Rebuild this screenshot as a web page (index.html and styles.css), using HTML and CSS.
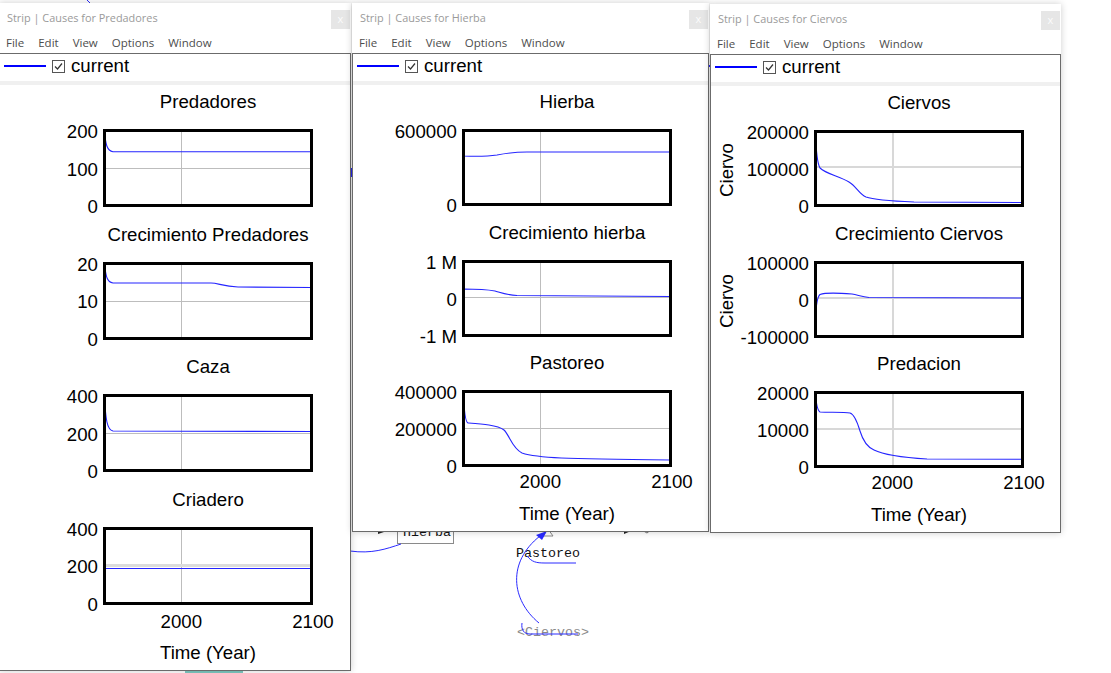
FILE: index.html
```html
<!DOCTYPE html>
<html lang="es">
<head>
<meta charset="utf-8">
<title>Strip</title>
<link rel="stylesheet" href="styles.css">
</head>
<body>
<div class="desk">
  <svg class="diagram" width="1111" height="673" viewBox="0 0 1111 673">
    <line class="bl" x1="87" y1="0" x2="90" y2="3"/>
    <rect class="blf" x="350" y="168" width="2" height="9"/>
    <rect class="blf" x="708" y="65" width="3" height="2"/>
    <rect class="box" x="397.5" y="512.5" width="56" height="31"/>
    <text class="mono" x="403" y="536">Hierba</text>
    <path class="bl" d="M350,551 C372,554 386,549 401,544"/>
    <polygon class="blk" points="378,530 384,532 378,534"/>
    <polygon class="tri" points="543,536 548,529 553,536"/>
    <polygon class="blk" points="624,528 631,531 624,534"/>
    <path class="gr" d="M640,529 L647,533 L652,529"/>
    <text class="mono" x="516" y="557">Pastoreo</text>
    <path class="bl" d="M527,556 C532,562 536,563 545,563 L576,563"/>
    <path class="bl" d="M539,623 C511,600 507,562 540,536"/>
    <polygon class="blf" points="547,531 536,535 542,540"/>
    <text class="mono grey" x="517" y="636">&lt;Ciervos&gt;</text>
    <path class="bl" d="M522,623 C521,630 524,634 530,634 L578,634"/>
    <rect class="teal" x="185" y="670" width="58" height="3"/>
  </svg>

  <div class="win w1">
    <div class="titlebar"><span class="ttl">Strip | Causes for Predadores</span><span class="close">x</span></div>
    <div class="menubar"><span>File</span><span>Edit</span><span>View</span><span>Options</span><span>Window</span></div>
    <div class="panel">
      <div class="legend"><span class="swatch"></span><svg class="chk" viewBox="0 0 13 13"><rect x="0.5" y="0.5" width="12" height="12"/><path d="M3,6.5 L5.5,9 L10,3.5"/></svg><span class="lname">current</span></div>
      <div class="strip"></div>
      <div class="charts">
        <div class="chart">
          <div class="ctitle">Predadores</div>
          <div class="crow">
            <div class="yaxis"><div class="ticks"><span>200</span><span>100</span><span>0</span></div></div>
            <svg class="plot" viewBox="0 0 210 78">
              <rect class="bg" x="1.5" y="1.5" width="207" height="75"/>
              <line class="g" x1="78.5" y1="2" x2="78.5" y2="76"/>
              <line class="g" x1="2" y1="39.5" x2="208" y2="39.5"/>
              <path class="c" d="M1.5,2 C2.5,15 4,22 10,22.7 L208,22.7"/>
              <rect class="frame" x="1.5" y="1.5" width="207" height="75"/>
            </svg>
          </div>
        </div>
        <div class="chart">
          <div class="ctitle">Crecimiento Predadores</div>
          <div class="crow">
            <div class="yaxis"><div class="ticks"><span>20</span><span>10</span><span>0</span></div></div>
            <svg class="plot" viewBox="0 0 210 78">
              <rect class="bg" x="1.5" y="1.5" width="207" height="75"/>
              <line class="g" x1="78.5" y1="2" x2="78.5" y2="76"/>
              <line class="g" x1="2" y1="39.5" x2="208" y2="39.5"/>
              <path class="c" d="M1.5,2 C3,15 4,20 10,21 L108,21 C115,21 120,24.5 135,25 L208,25.5"/>
              <rect class="frame" x="1.5" y="1.5" width="207" height="75"/>
            </svg>
          </div>
        </div>
        <div class="chart">
          <div class="ctitle">Caza</div>
          <div class="crow">
            <div class="yaxis"><div class="ticks"><span>400</span><span>200</span><span>0</span></div></div>
            <svg class="plot" viewBox="0 0 210 78">
              <rect class="bg" x="1.5" y="1.5" width="207" height="75"/>
              <line class="g" x1="78.5" y1="2" x2="78.5" y2="76"/>
              <line class="g" x1="2" y1="39.5" x2="208" y2="39.5"/>
              <path class="c" d="M1.5,2 C2.5,25 4,36 10,37 L208,37.5"/>
              <rect class="frame" x="1.5" y="1.5" width="207" height="75"/>
            </svg>
          </div>
        </div>
        <div class="chart">
          <div class="ctitle">Criadero</div>
          <div class="crow">
            <div class="yaxis"><div class="ticks"><span>400</span><span>200</span><span>0</span></div></div>
            <svg class="plot" viewBox="0 0 210 78">
              <rect class="bg" x="1.5" y="1.5" width="207" height="75"/>
              <line class="g" x1="78.5" y1="2" x2="78.5" y2="76"/>
              <line class="gw" x1="2" y1="38.5" x2="208" y2="38.5"/>
              <path class="c" d="M2,41.5 L208,41.5"/>
              <rect class="frame" x="1.5" y="1.5" width="207" height="75"/>
            </svg>
          </div>
        </div>
        <div class="xaxis"><span class="xt"><span>2000</span></span><span class="xt"><span>2100</span></span></div>
        <div class="xtitle">Time (Year)</div>
      </div>
    </div>
  </div>

  <div class="win w2">
    <div class="titlebar"><span class="ttl">Strip | Causes for Hierba</span><span class="close">x</span></div>
    <div class="menubar"><span>File</span><span>Edit</span><span>View</span><span>Options</span><span>Window</span></div>
    <div class="panel">
      <div class="legend"><span class="swatch"></span><svg class="chk" viewBox="0 0 13 13"><rect x="0.5" y="0.5" width="12" height="12"/><path d="M3,6.5 L5.5,9 L10,3.5"/></svg><span class="lname">current</span></div>
      <div class="strip"></div>
      <div class="charts">
        <div class="chart">
          <div class="ctitle">Hierba</div>
          <div class="crow">
            <div class="yaxis"><div class="ticks"><span>600000</span><span class="blank"></span><span>0</span></div></div>
            <svg class="plot" viewBox="0 0 210 77">
              <rect class="bg" x="1.5" y="1.5" width="207" height="74"/>
              <line class="g" x1="78.5" y1="2" x2="78.5" y2="75"/>
              <path class="c" d="M1.5,2 L1.5,27 C15,27.5 25,27.5 35,26 C45,24 52,23 65,23 L208,23"/>
              <rect class="frame" x="1.5" y="1.5" width="207" height="74"/>
            </svg>
          </div>
        </div>
        <div class="chart">
          <div class="ctitle">Crecimiento hierba</div>
          <div class="crow">
            <div class="yaxis"><div class="ticks"><span>1 M</span><span>0</span><span>-1 M</span></div></div>
            <svg class="plot" viewBox="0 0 210 77">
              <rect class="bg" x="1.5" y="1.5" width="207" height="74"/>
              <line class="g" x1="78.5" y1="2" x2="78.5" y2="75"/>
              <line class="g" x1="2" y1="37.5" x2="208" y2="37.5"/>
              <path class="c" d="M1.5,60 L1.5,29 C10,29 25,29.5 33,31 C40,33 45,35 55,35.5 L208,36.5"/>
              <rect class="frame" x="1.5" y="1.5" width="207" height="74"/>
            </svg>
          </div>
        </div>
        <div class="chart">
          <div class="ctitle">Pastoreo</div>
          <div class="crow">
            <div class="yaxis"><div class="ticks"><span>400000</span><span>200000</span><span>0</span></div></div>
            <svg class="plot" viewBox="0 0 210 77">
              <rect class="bg" x="1.5" y="1.5" width="207" height="74"/>
              <line class="g" x1="78.5" y1="2" x2="78.5" y2="75"/>
              <line class="g" x1="2" y1="38.5" x2="208" y2="38.5"/>
              <path class="c" d="M1.5,2 C2,20 3,32 6,33 C20,34 35,35 42,40 C48,46 50,58 60,63 C75,68 100,69 208,70"/>
              <rect class="frame" x="1.5" y="1.5" width="207" height="74"/>
            </svg>
          </div>
        </div>
        <div class="xaxis"><span class="xt"><span>2000</span></span><span class="xt"><span>2100</span></span></div>
        <div class="xtitle">Time (Year)</div>
      </div>
    </div>
  </div>

  <div class="win w3">
    <div class="titlebar"><span class="ttl">Strip | Causes for Ciervos</span><span class="close">x</span></div>
    <div class="menubar"><span>File</span><span>Edit</span><span>View</span><span>Options</span><span>Window</span></div>
    <div class="panel">
      <div class="legend"><span class="swatch"></span><svg class="chk" viewBox="0 0 13 13"><rect x="0.5" y="0.5" width="12" height="12"/><path d="M3,6.5 L5.5,9 L10,3.5"/></svg><span class="lname">current</span></div>
      <div class="strip"></div>
      <div class="charts">
        <div class="chart">
          <div class="ctitle">Ciervos</div>
          <div class="crow">
            <div class="yaxis"><span class="ylabel">Ciervo</span><div class="ticks"><span>200000</span><span>100000</span><span>0</span></div></div>
            <svg class="plot" viewBox="0 0 210 77">
              <rect class="bg" x="1.5" y="1.5" width="207" height="74"/>
              <line class="gl" x1="79" y1="2" x2="79" y2="75"/>
              <line class="gl" x1="2" y1="37" x2="208" y2="37"/>
              <path class="c" d="M1.5,1 C2,20 3,33 6,38 C12,44 25,46 35,52 C42,56 45,64 52,67 C60,70 75,71 100,72 L208,72.5"/>
              <rect class="frame" x="1.5" y="1.5" width="207" height="74"/>
            </svg>
          </div>
        </div>
        <div class="chart">
          <div class="ctitle">Crecimiento Ciervos</div>
          <div class="crow">
            <div class="yaxis"><span class="ylabel">Ciervo</span><div class="ticks"><span>100000</span><span>0</span><span>-100000</span></div></div>
            <svg class="plot" viewBox="0 0 210 77">
              <rect class="bg" x="1.5" y="1.5" width="207" height="74"/>
              <line class="gl" x1="79" y1="2" x2="79" y2="75"/>
              <line class="gl" x1="2" y1="37" x2="208" y2="37"/>
              <path class="c" d="M1.5,57 C2,45 3,36 6,33.5 C10,32 25,32 38,33 C44,34 48,36 55,36.5 L208,37"/>
              <rect class="frame" x="1.5" y="1.5" width="207" height="74"/>
            </svg>
          </div>
        </div>
        <div class="chart">
          <div class="ctitle">Predacion</div>
          <div class="crow">
            <div class="yaxis"><div class="ticks"><span>20000</span><span>10000</span><span>0</span></div></div>
            <svg class="plot" viewBox="0 0 210 77">
              <rect class="bg" x="1.5" y="1.5" width="207" height="74"/>
              <line class="gl" x1="79" y1="2" x2="79" y2="75"/>
              <line class="gl" x1="2" y1="38" x2="208" y2="38"/>
              <path class="c" d="M1.5,1 C2,12 3,19 6,21 C15,21.5 30,21 36,22 C40,23 43,30 46,40 C49,50 53,56 60,59 C68,63 80,66 113,68 L208,68.3"/>
              <rect class="frame" x="1.5" y="1.5" width="207" height="74"/>
            </svg>
          </div>
        </div>
        <div class="xaxis"><span class="xt"><span>2000</span></span><span class="xt"><span>2100</span></span></div>
        <div class="xtitle">Time (Year)</div>
      </div>
    </div>
  </div>
</div>
</body>
</html>
```

FILE: styles.css
```css
* { box-sizing: border-box; }
html, body { margin: 0; padding: 0; background: #ffffff; }
body { width: 1111px; height: 673px; overflow: hidden; font-family: "Liberation Sans", Arial, sans-serif; }

.desk { position: relative; width: 1111px; height: 673px; }

.diagram { position: absolute; left: 0; top: 0; }
.diagram .bl { fill: none; stroke: #2a2aff; stroke-width: 1; }
.diagram .blf { fill: #2a2aff; }
.diagram .blk { fill: #222; }
.diagram .gr { fill: none; stroke: #777; stroke-width: 1; }
.diagram .box { fill: #fff; stroke: #8a8a8a; stroke-width: 1; }
.diagram .tri { fill: #fff; stroke: #888; stroke-width: 1; }
.diagram .mono { font-family: "Liberation Mono", "Courier New", monospace; font-size: 13.33px; fill: #111; }
.diagram .grey { fill: #8a8a8a; }
.diagram .teal { fill: #7ec9c1; }

.win {
  position: absolute;
  display: flex;
  flex-direction: column;
  background: #ffffff;
  box-shadow: 0 0 7px rgba(0, 0, 0, 0.2);
}
.w1 { left: -1px; top: 3px; width: 352px; height: 668px; --off: 103px; --bh: 78px; --cg: 16.67px; --axm: 6px; --ttm: 9px; }
.w2 { left: 352px; top: 3px; width: 357px; height: 529px; --off: 109px; --bh: 77px; --cg: 15.5px; --axm: 4px; --ttm: 10px; }
.w3 { left: 710px; top: 4px; width: 351px; height: 529px; --off: 103px; --bh: 77px; --cg: 15.5px; --axm: 4px; --ttm: 10px; }

.titlebar {
  height: 28px;
  flex: none;
  display: flex;
  align-items: flex-start;
  justify-content: space-between;
  padding: 0 1px 0 8px;
  font-family: "Open Sans", "Noto Sans", sans-serif;
}
.ttl { margin-top: 7px; line-height: 16px; font-size: 10.9px; color: #9a9a9a; white-space: nowrap; }
.close {
  margin-top: 7px;
  width: 19px;
  height: 19px;
  background: #e6e6e6;
  color: #fbfbfb;
  font-size: 11px;
  line-height: 18px;
  text-align: center;
}

.menubar {
  height: 22px;
  flex: none;
  display: flex;
  gap: 14px;
  padding: 2px 0 0 7px;
  font-family: "Open Sans", "Noto Sans", sans-serif;
  font-size: 11.5px;
  line-height: 20px;
  color: #4d4d4d;
}

.panel {
  flex: 1;
  border: 1px solid #6b6b6b;
  background: #ffffff;
  display: flex;
  flex-direction: column;
  min-height: 0;
}

.legend {
  height: 27px;
  flex: none;
  display: flex;
  align-items: center;
  padding-bottom: 3px;
}
.swatch { width: 42px; height: 2px; background: #0000ff; margin-left: 4px; }
.chk { width: 13px; height: 13px; margin-left: 6px; display: block; }
.chk rect { fill: #fff; stroke: #555; stroke-width: 1; }
.chk path { fill: none; stroke: #333; stroke-width: 1.2; }
.lname { margin-left: 6px; font-size: 14pt; line-height: 22px; color: #000; }

.strip { height: 4px; flex: none; background: #f0f0f0; }

.charts { padding-top: 6px; font-size: 14pt; color: #000; }

.chart + .chart { margin-top: var(--cg); }
.ctitle {
  margin-left: var(--off);
  width: 210px;
  text-align: center;
  line-height: 22px;
  white-space: nowrap;
}
.crow {
  display: flex;
  align-items: flex-start;
  margin-top: 16px;
  height: var(--bh);
}
.yaxis {
  width: calc(var(--off) - 5px);
  margin-right: 5px;
  height: var(--bh);
  display: flex;
  align-items: flex-start;
  flex: none;
}
.ylabel {
  writing-mode: vertical-rl;
  transform: rotate(180deg);
  line-height: 22px;
  margin-left: 5px;
  align-self: center;
  margin-top: 3px;
}
.ticks {
  flex: 1;
  display: flex;
  flex-direction: column;
  justify-content: space-between;
  align-items: flex-end;
  height: calc(var(--bh) + 19px);
  margin-top: -8px;
  line-height: 22px;
  white-space: nowrap;
}
.ticks .blank { height: 22px; }
.plot { width: 210px; height: var(--bh); display: block; flex: none; }
.plot .bg { fill: #ffffff; }
.plot .g { stroke: #bdbdbd; stroke-width: 1; }
.plot .gw { stroke: #dcdcdc; stroke-width: 3; }
.plot .gl { stroke: #d8d8d8; stroke-width: 2; }
.plot .c { fill: none; stroke: #2525ff; stroke-width: 1.1; }
.plot .frame { fill: none; stroke: #000; stroke-width: 3; }

.xaxis {
  margin-left: var(--off);
  width: 210px;
  display: grid;
  grid-template-columns: 37.3% 62.7%;
  margin-top: var(--axm);
  line-height: 22px;
}
.xt { display: flex; justify-content: flex-end; }
.xt span { transform: translateX(50%); }
.xtitle {
  margin-left: var(--off);
  width: 210px;
  text-align: center;
  margin-top: var(--ttm);
  line-height: 22px;
}
```
